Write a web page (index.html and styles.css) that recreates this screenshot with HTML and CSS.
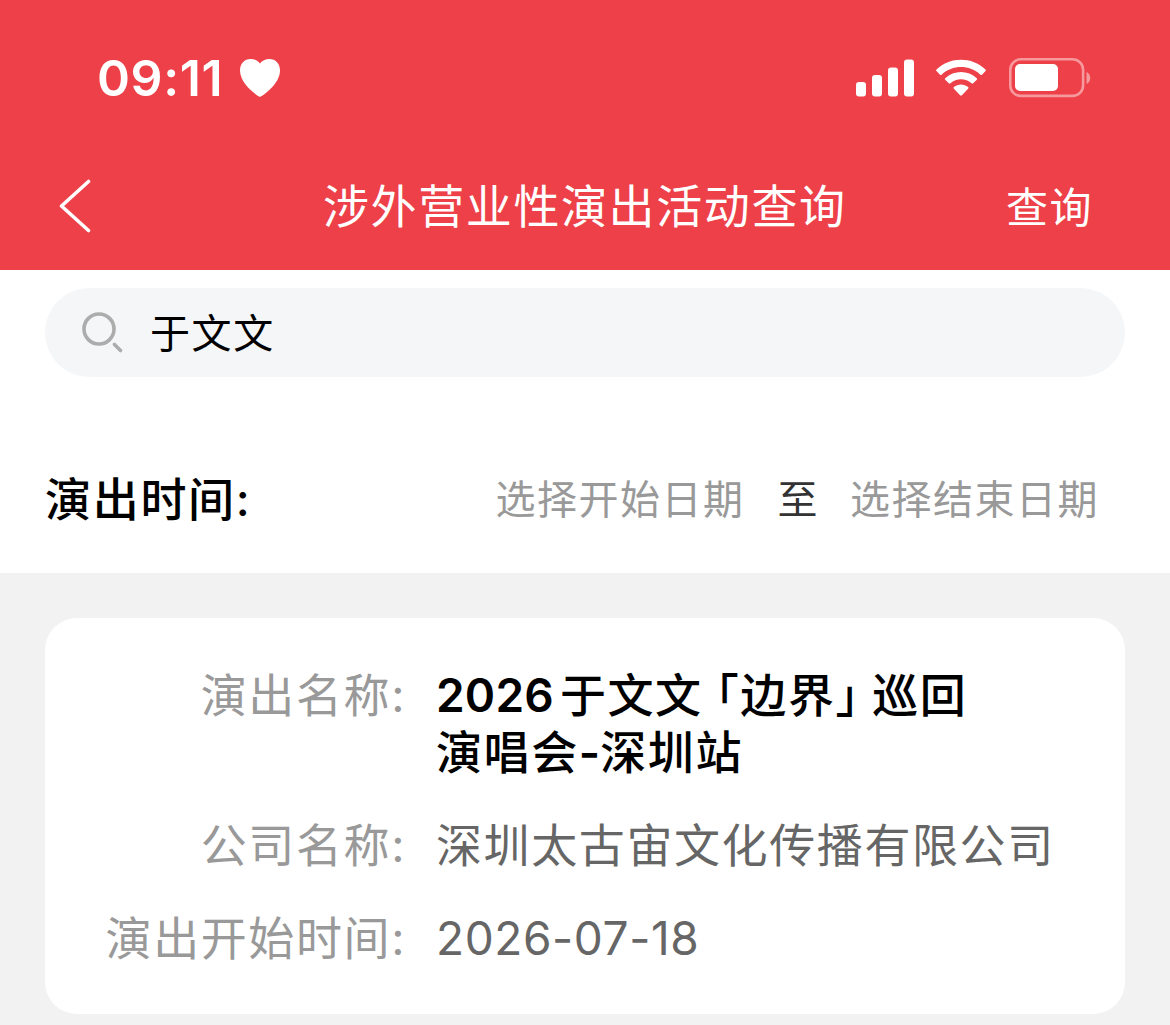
FILE: index.html
```
<!DOCTYPE html>
<html lang="zh-CN">
<head>
	<meta charset="UTF-8">
	<title>涉外营业性演出活动查询</title>
	<link rel="stylesheet" href="styles.css">
</head>
<body>
	<header class="header">
		<div class="status">
			<span class="time">09:11</span>
			<svg class="heart" width="42" height="40" viewBox="0 0 42 40">
				<path fill="#fff" d="M21 39C18 37.500 1 26 1 12.500C1 5.500 5.500 1 11.500 1C15.500 1 19 2.500 21 5.500C23 2.500 26.500 1 30.500 1C36.500 1 41 5.500 41 12.500C41 26 24 37.500 21 39Z"/>
			</svg>
			<div class="status-right">
				<svg width="58" height="38" viewBox="0 0 58 38" fill="#fff">
					<rect x="0" y="23" width="10" height="14.500" rx="3"/>
					<rect x="16" y="16" width="10" height="21.500" rx="3"/>
					<rect x="32" y="8.500" width="10" height="29" rx="3"/>
					<rect x="48" y="0.500" width="10" height="37" rx="3"/>
				</svg>
				<svg class="wifi" width="52" height="38" viewBox="0 0 52 38" fill="#fff">
					<path d="M1.500 10.500C15 -2.500 37 -2.500 50.500 10.500Q51.300 11.300 50.500 12.100L47 15.700Q46.200 16.400 45.400 15.700C34.500 5.500 17.500 5.500 6.600 15.700Q5.800 16.400 5 15.700L1.500 12.100Q0.700 11.300 1.500 10.500Z"/>
					<path d="M10.200 19.200C19 11 33 11 41.800 19.200Q42.600 20 41.800 20.800L38.200 24.300Q37.400 25 36.600 24.300C30.500 19 21.500 19 15.400 24.300Q14.600 25 13.800 24.300L10.200 20.800Q9.400 20 10.200 19.200Z"/>
					<path d="M18.900 28C23 24.600 29 24.600 33.100 28Q34 28.800 33.100 29.700L26.900 36.300Q26 37.200 25.100 36.300L18.900 29.700Q18 28.800 18.900 28Z"/>
				</svg>
				<svg class="battery" width="82" height="40" viewBox="0 0 82 40">
					<rect x="1.300" y="1.300" width="72.800" height="36.600" rx="10.500" fill="none" stroke="#f6989c" stroke-width="2.600"/>
					<rect x="6" y="6" width="43" height="27" rx="5" fill="#fff"/>
					<path d="M77.500 14C82.500 16 82.500 24 77.500 26Z" fill="#f6989c"/>
				</svg>
			</div>
		</div>
		<div class="nav">
			<a class="back" href="javascript:;">
				<svg width="34" height="54" viewBox="0 0 34 54">
					<path d="M30.500 2.500L3.500 27L30.500 51.500" fill="none" stroke="#fff" stroke-width="3.600" stroke-linecap="round" stroke-linejoin="round"/>
				</svg>
			</a>
			<h1>涉外营业性演出活动查询</h1>
			<a class="query" href="javascript:;">查询</a>
		</div>
	</header>
	<section class="filter">
		<div class="search">
			<svg width="44" height="44" viewBox="0 0 44 44" fill="none" stroke="#acacac">
				<circle cx="18" cy="18" r="15" stroke-width="3.600"/>
				<path d="M33.500 33.500L39.500 39.500" stroke-width="3.600" stroke-linecap="round"/>
			</svg>
			<span>于文文</span>
		</div>
		<div class="date">
			<span class="date-label">演出时间<i>:</i></span>
			<span class="pick">选择开始日期</span>
			<span class="to">至</span>
			<span class="pick">选择结束日期</span>
		</div>
	</section>
	<section class="list">
		<div class="card">
			<div class="row">
				<span class="label">演出名称<i>:</i></span>
				<span class="value name"><b class="num">2026</b>于文文<b class="open">「</b>边界<b class="close">」</b>巡回<br>演唱会<b class="dash">-</b>深圳站</span>
			</div>
			<div class="row">
				<span class="label">公司名称<i>:</i></span>
				<span class="value">深圳太古宙文化传播有限公司</span>
			</div>
			<div class="row">
				<span class="label">演出开始时间<i>:</i></span>
				<span class="value day">2026-07-18</span>
			</div>
		</div>
	</section>
</body>
</html>
```
FILE: styles.css
```
* {
	margin: 0;
	padding: 0;
	box-sizing: border-box;
}
body {
	height: 1025px;
	overflow: hidden;
	background-color: #f2f2f2;
	font-family: "Noto Sans CJK SC", sans-serif;
}
a {
	color: #fff;
	text-decoration: none;
}
i, b {
	font-style: normal;
	font-weight: inherit;
	line-height: 0;
}
svg {
	display: block;
	flex: none;
}

/* 顶部 */
.header {
	height: 270px;
	background-color: #ed4048;
	color: #fff;
}
.status {
	display: flex;
	align-items: center;
	height: 156px;
	padding: 0 79px 0 97px;
}
.time {
	width: 142px;
	font: 600 50px/60px Inter, sans-serif;
	letter-spacing: 0.600px;
}
.status-right {
	display: flex;
	align-items: center;
	margin-left: auto;
}
.wifi {
	margin-left: 21px;
}
.battery {
	margin-left: 22px;
}
.nav {
	display: flex;
	align-items: center;
	height: 100px;
	padding: 0 77px 0 58px;
}
.back {
	width: 265px;
}
.nav h1 {
	padding-bottom: 7px;
	font-size: 46px;
	font-weight: 400;
	letter-spacing: 1.600px;
}
.query {
	margin-left: auto;
	padding-bottom: 4px;
	font-size: 42px;
	letter-spacing: 1.500px;
}

/* 搜索和日期 */
.filter {
	height: 303px;
	padding: 18px 45px 0;
	background-color: #fff;
}
.search {
	display: flex;
	align-items: center;
	height: 89px;
	padding-left: 36px;
	border-radius: 45px;
	background-color: #f5f6f8;
}
.search span {
	margin-left: 25px;
	padding-bottom: 4px;
	font-size: 40px;
	letter-spacing: 1.600px;
	color: #000;
}
.date {
	display: flex;
	align-items: center;
	height: 70px;
	margin-top: 85px;
	padding-right: 26px;
	font-size: 40px;
	letter-spacing: 1.500px;
}
.date-label {
	margin-right: auto;
	padding-bottom: 2px;
	font-size: 46px;
	font-weight: 500;
	letter-spacing: 1.700px;
}
.date-label i,
.label i {
	font-family: Inter, sans-serif;
}
.pick {
	color: #999;
}
.to {
	margin: 0 31px 0 33px;
	color: #333;
}

/* 结果卡片 */
.list {
	padding: 45px;
}
.card {
	height: 396px;
	padding: 46px 40px 0 60px;
	border-radius: 32px;
	background-color: #fff;
}
.row {
	display: flex;
	margin-bottom: 36px;
	font-size: 46px;
	line-height: 57px;
	letter-spacing: 1.600px;
	white-space: nowrap;
}
.label {
	width: 301px;
	text-align: right;
	color: #999;
}
.value {
	margin-left: 30px;
	color: #666;
}
.name {
	font-weight: 500;
	color: #000;
}
.num {
	margin-right: 6px;
	font-family: Inter, sans-serif;
	font-weight: 600;
	letter-spacing: 0.200px;
}
/* 引号按半角排,再单独留空 */
.open,
.close {
	font-feature-settings: "halt";
}
.open {
	margin-left: 13px;
}
.close {
	margin-right: 12px;
}
.dash {
	font-family: Inter, sans-serif;
	font-weight: 600;
	letter-spacing: 0;
}
.day {
	padding-top: 3px;
	font-family: Inter, sans-serif;
	letter-spacing: 0.600px;
}
```
